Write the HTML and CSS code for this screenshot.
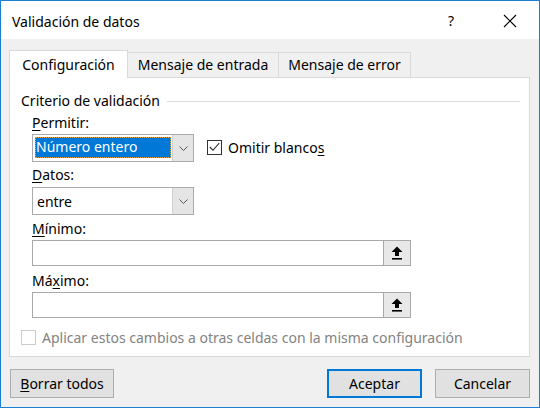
FILE: index.html
```html
<!DOCTYPE html>
<html lang="es">
<head>
<meta charset="utf-8">
<title>Validación de datos</title>
<link rel="stylesheet" href="styles.css">
</head>
<body>
<div class="win">
  <div class="titlebar">
    <span class="title">Validación de datos</span>
    <span class="help">?</span>
    <span class="close">
      <svg width="14" height="14" viewBox="0 0 14 14"><path d="M1 1 L13 13 M13 1 L1 13" stroke="#000" stroke-width="1.1" fill="none"/></svg>
    </span>
  </div>
  <div class="body">
    <div class="tabs">
      <div class="tab active t1">Configuración</div>
      <div class="tab t2">Mensaje de entrada</div>
      <div class="tab t3">Mensaje de error</div>
    </div>
    <div class="panel">
      <div class="group-title"><span>Criterio de validación</span><span class="rule"></span></div>
      <div class="fields">
        <div class="lbl l-permitir"><u>P</u>ermitir:</div>
        <div class="row r-permitir">
          <div class="combo">
            <div class="value"><span class="selected">Número entero</span></div>
            <div class="drop"><svg width="9" height="5" viewBox="0 0 9 5"><path d="M0.5 0.5 L4.5 4.5 L8.5 0.5" stroke="#555" stroke-width="1" fill="none"/></svg></div>
          </div>
          <div class="chk">
            <span class="box"><svg width="11" height="10" viewBox="0 0 11 10"><path d="M0.8 5 L4 8.3 L10.3 1" stroke="#222" stroke-width="1.1" fill="none"/></svg></span>
            <span>Omitir blanco<u>s</u></span>
          </div>
        </div>
        <div class="lbl l-datos"><u>D</u>atos:</div>
        <div class="combo c-datos">
          <div class="value"><span class="plain">entre</span></div>
          <div class="drop"><svg width="9" height="5" viewBox="0 0 9 5"><path d="M0.5 0.5 L4.5 4.5 L8.5 0.5" stroke="#555" stroke-width="1" fill="none"/></svg></div>
        </div>
        <div class="lbl l-min"><u>M</u>ínimo:</div>
        <div class="ref r-min">
          <div class="field"></div>
          <div class="refbtn"><svg width="12" height="14" viewBox="0 0 12 14"><path d="M6 0.5 L11.5 6 L8 6 L8 10 L4 10 L4 6 L0.5 6 Z" fill="#000"/><rect x="1" y="12" width="10" height="1.6" fill="#000"/></svg></div>
        </div>
        <div class="lbl l-max">Má<u>x</u>imo:</div>
        <div class="ref r-max">
          <div class="field"></div>
          <div class="refbtn"><svg width="12" height="14" viewBox="0 0 12 14"><path d="M6 0.5 L11.5 6 L8 6 L8 10 L4 10 L4 6 L0.5 6 Z" fill="#000"/><rect x="1" y="12" width="10" height="1.6" fill="#000"/></svg></div>
        </div>
      </div>
      <div class="apply">
        <span class="box disabled"></span>
        <span class="apply-text">Aplicar estos cambios a otras celdas con la misma configuración</span>
      </div>
    </div>
    <div class="buttons">
      <div class="btn b-borrar"><u>B</u>orrar todos</div>
      <div class="spacer"></div>
      <div class="btn b-aceptar">Aceptar</div>
      <div class="btn b-cancelar">Cancelar</div>
    </div>
  </div>
</div>
</body>
</html>
```

FILE: styles.css
```css
* { box-sizing: border-box; }
html, body { margin: 0; padding: 0; background: #fff; }
body {
  font-family: "Noto Sans", "Open Sans", sans-serif;
  font-size: 14px;
  color: #000;
}
u { text-decoration: underline; text-underline-offset: 2px; text-decoration-thickness: 1px; }

.win {
  width: 540px;
  height: 408px;
  border: 1px solid #1a7fd4;
  background: #f0f0f0;
  display: flex;
  flex-direction: column;
}

.titlebar {
  height: 38px;
  background: #fff;
  display: flex;
  align-items: center;
  padding-left: 11px;
  flex: none;
}
.title { font-size: 14px; flex: 1; padding-top: 2px; }
.help { font-size: 14px; width: 20px; margin-right: 42px; text-align: center; padding-top: 1px; }
.close { width: 14px; height: 14px; margin-right: 22px; display: flex; margin-top: 2px; }

.body {
  flex: 1;
  padding: 11px 9px 0 8px;
  display: flex;
  flex-direction: column;
}

.tabs {
  display: flex;
  align-items: flex-end;
  height: 27px;
  position: relative;
  z-index: 1;
}
.tab {
  height: 25px;
  border: 1px solid #d9d9d9;
  border-bottom: none;
  background: #f0f0f0;
  text-align: center;
  line-height: 23px;
  margin-bottom: 0;
  white-space: nowrap;
}
.tab.active {
  height: 28px;
  background: #fff;
  line-height: 28px;
  margin-bottom: -1px;
}
.t1 { width: 119px; }
.t2 { width: 151px; border-left: none; }
.t3 { width: 132px; border-left: none; }

.panel {
  height: 280px;
  background: #fff;
  border: 1px solid #d9d9d9;
  padding: 14px 9px 0 11px;
  display: flex;
  flex-direction: column;
  flex: none;
}

.group-title {
  display: flex;
  align-items: center;
  height: 18px;
  line-height: 18px;
}
.group-title .rule {
  flex: 1;
  height: 1px;
  background: #dcdcdc;
  margin-left: 7px;
  margin-top: 1px;
}

.fields {
  padding-left: 11px;
  display: flex;
  flex-direction: column;
  align-items: flex-start;
}
.lbl { height: 18px; line-height: 18px; }
.l-permitir { margin-top: 4px; }
.l-datos { margin-top: 4px; }
.l-min { margin-top: 5px; }
.l-max { margin-top: 6px; }

.row { display: flex; align-items: center; margin-top: 2px; }

.combo {
  width: 162px;
  height: 28px;
  border: 1px solid #ababab;
  background: #fff;
  display: flex;
}
.c-datos { margin-top: 3px; }
.combo .value {
  flex: 1;
  padding: 2px 1px 3px 2px;
  display: flex;
}
.combo .selected {
  flex: 1;
  background: #0078d7;
  color: #fff;
  outline: 1px dotted #e8a33c;
  outline-offset: -1px;
  line-height: 19px;
  padding-left: 1px;
}
.combo .plain { line-height: 23px; padding-left: 2px; }
.combo .drop {
  width: 21px;
  background: #e5e5e5;
  border-left: 1px solid #d0d0d0;
  display: flex;
  align-items: center;
  justify-content: center;
}

.chk {
  display: flex;
  align-items: center;
  margin-left: 13px;
  margin-top: -2px;
}
.box {
  width: 15px;
  height: 15px;
  border: 1px solid #333;
  background: #fff;
  display: flex;
  align-items: center;
  justify-content: center;
  margin-right: 6px;
}
.box.disabled { border-color: #cccccc; }

.ref {
  width: 379px;
  height: 26px;
  border: 1px solid #a9a9a9;
  background: #fff;
  display: flex;
  margin-top: 2px;
}
.ref .field { flex: 1; }
.ref .refbtn {
  width: 27px;
  background: #e8e8e8;
  border-left: 1px solid #a9a9a9;
  display: flex;
  align-items: center;
  justify-content: center;
}

.apply {
  display: flex;
  align-items: center;
  margin-top: 10px;
  height: 18px;
}
.apply-text { color: #838383; }

.buttons {
  display: flex;
  margin-top: 12px;
  height: 29px;
  padding-right: 0;
}
.spacer { flex: 1; }
.btn {
  height: 29px;
  background: #e1e1e1;
  border: 1px solid #adadad;
  display: flex;
  align-items: center;
  justify-content: center;
}
.b-borrar { width: 104px; margin-left: 1px; }
.b-aceptar { width: 95px; border: 2px solid #0078d7; }
.b-cancelar { width: 95px; margin-left: 13px; }
```
